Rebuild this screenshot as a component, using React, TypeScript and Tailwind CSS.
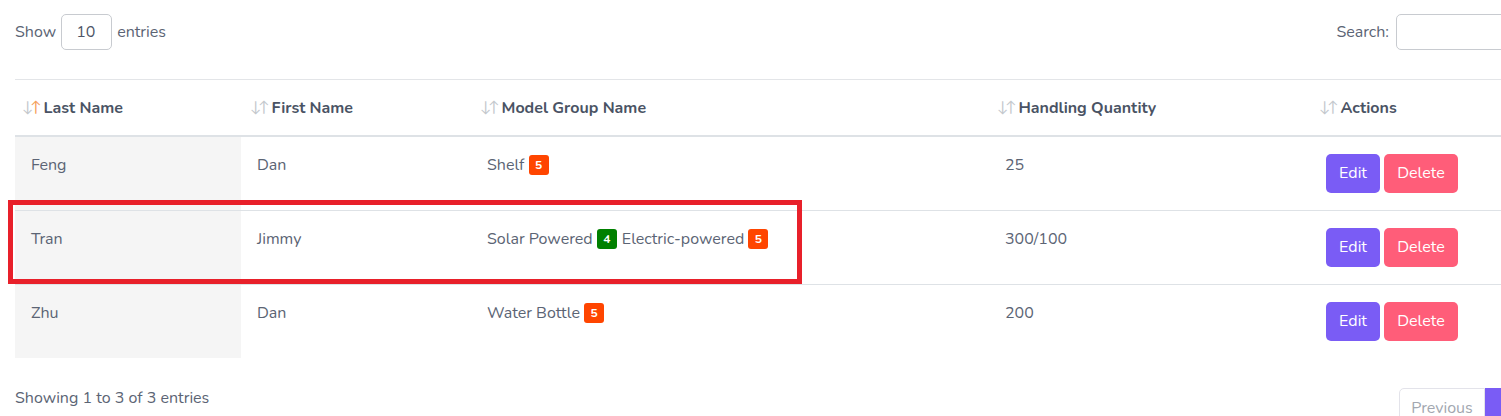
import React from 'react'

type Badge = { n: number; color: 'orange' | 'green' }
type Row = { last: string; first: string; groups: { name: string; badge: Badge }[]; qty: string }

const rows: Row[] = [
  { last: 'Feng', first: 'Dan', groups: [{ name: 'Shelf', badge: { n: 5, color: 'orange' } }], qty: '25' },
  {
    last: 'Tran',
    first: 'Jimmy',
    groups: [
      { name: 'Solar Powered', badge: { n: 4, color: 'green' } },
      { name: 'Electric-powered', badge: { n: 5, color: 'orange' } },
    ],
    qty: '300/100',
  },
  { last: 'Zhu', first: 'Dan', groups: [{ name: 'Water Bottle', badge: { n: 5, color: 'orange' } }], qty: '200' },
]

function SortIcon({ active }: { active?: boolean }) {
  return (
    <span className="inline-flex text-[15px] font-normal leading-none tracking-[-3px]">
      <span className="text-[#c4c8cd]">↓</span>
      <span className={active ? 'text-[#f5a05a]' : 'text-[#c4c8cd]'}>↑</span>
    </span>
  )
}

function Th({ label, active, className }: { label: string; active?: boolean; className: string }) {
  return (
    <th className={`px-2 py-[15px] text-left font-bold text-[#4a5364] ${className}`}>
      <span className="inline-flex items-center">
        <SortIcon active={active} />
        <span className="ml-[5px]">{label}</span>
      </span>
    </th>
  )
}

export default function App() {
  return (
    <div
      className="relative h-[416px] w-[1501px] overflow-hidden bg-white text-[16px] text-[#5b6474]"
      style={{ fontFamily: 'Nunito, Lato, "Open Sans", sans-serif' }}
    >
      <div className="w-[1600px] px-[15px]">
        {/* Top controls */}
        <div className="flex h-[79px] items-start justify-between pt-[14px]">
          <div className="flex items-center">
            <span>Show</span>
            <div className="mx-[5px] flex h-[36px] w-[51px] items-center rounded-[5px] border border-[#c8cbd0] pl-[14px] text-[#4d5566]">
              10
            </div>
            <span>entries</span>
          </div>
          <div className="mr-[15px] flex items-center">
            <span className="mr-[7px]">Search:</span>
            <div className="h-[36px] w-[174px] rounded-[5px] border border-[#c8cbd0]" />
          </div>
        </div>

        {/* Table */}
        <table className="w-full border-collapse">
          <thead>
            <tr className="border-t border-b-2 border-t-[#e3e5e8] border-b-[#dee2e6]">
              <Th label="Last Name" active className="w-[226px] pl-[7px]" />
              <Th label="First Name" className="w-[230px] pl-[9px]" />
              <Th label="Model Group Name" className="w-[518px] pl-[9px]" />
              <Th label="Handling Quantity" className="w-[321px]" />
              <Th label="Actions" className="pl-[9px]" />
            </tr>
          </thead>
          <tbody>
            {rows.map((r, i) => (
              <tr key={r.last} className={i < rows.length - 1 ? 'border-b border-[#dee2e6]' : ''}>
                <td className="bg-[#f5f5f5] px-4 pt-4 align-top">{r.last}</td>
                <td className="px-4 pt-4 align-top">{r.first}</td>
                <td className="px-4 pt-4 align-top">
                  {r.groups.map((g) => (
                    <span key={g.name} className="mr-[5px]">
                      {g.name}{' '}
                      <span
                        className={`inline-flex h-[20px] min-w-[20px] items-center justify-center rounded-[3px] px-[5px] align-[1px] text-[12px] font-bold text-white ${
                          g.badge.color === 'green' ? 'bg-[#008000]' : 'bg-[#ff4500]'
                        }`}
                      >
                        {g.badge.n}
                      </span>
                    </span>
                  ))}
                </td>
                <td className="px-4 pt-4 align-top">{r.qty}</td>
                <td className="px-4 pt-[17px] pb-[17px] align-top">
                  <div className="flex gap-[4px]">
                    <button className="h-[39px] w-[54px] rounded-[5px] bg-[#7a5cf5] text-[16px] text-white">Edit</button>
                    <button className="h-[39px] w-[74px] rounded-[5px] bg-[#ff5d79] text-[16px] text-white">Delete</button>
                  </div>
                </td>
              </tr>
            ))}
          </tbody>
        </table>

        {/* Footer */}
        <div className="flex items-start justify-between">
          <span className="mt-[28px]">Showing 1 to 3 of 3 entries</span>
          <div className="mt-[30px] flex">
            <div className="flex h-[40px] w-[86px] items-center justify-center rounded-l-[5px] border border-[#e3e3ea] text-[#a2a7b0]">
              Previous
            </div>
            <div className="flex h-[40px] w-[40px] items-center justify-center bg-[#7a5cf5] text-white">1</div>
            <div className="flex h-[40px] w-[60px] items-center justify-center rounded-r-[5px] border border-[#e3e3ea] text-[#a2a7b0]">
              Next
            </div>
          </div>
        </div>
      </div>

      {/* highlight annotation */}
      <div className="pointer-events-none absolute left-[8px] top-[200px] h-[84px] w-[794px] border-[5px] border-[#e8202a]" />
    </div>
  )
}
